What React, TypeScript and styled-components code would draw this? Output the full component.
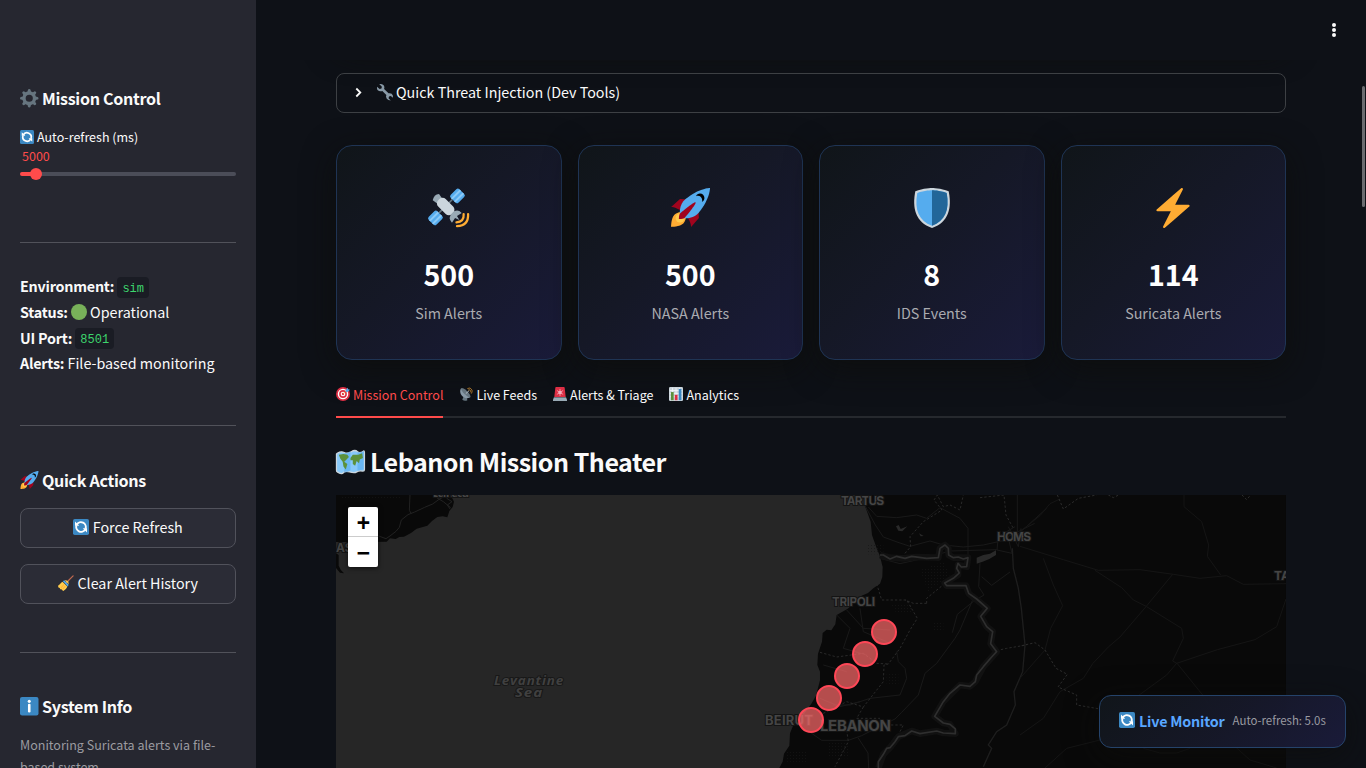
import React from 'react';
import styled, { createGlobalStyle } from 'styled-components';

const Global = createGlobalStyle`
  * { box-sizing: border-box; }
  body {
    margin: 0;
    overflow: hidden;
    background: #0e1117;
    color: #fafafa;
    font-family: "Noto Sans CJK SC", "Noto Sans", sans-serif;
    font-size: 14.32px;
  }
`;

const Shell = styled.div`
  display: flex;
  width: 100vw;
  height: 768px;
  overflow: hidden;
  position: relative;
`;

const Sidebar = styled.aside`
  flex: 0 0 256px;
  height: 768px;
  padding: 87px 20px 0;
  background: #262730;
  overflow: hidden;
`;

const SideHeading = styled.h3`
  display: flex;
  align-items: center;
  gap: 3.5px;
  margin: 0;
  height: 22px;
  font-size: 16.1px;
  font-weight: 600;
  letter-spacing: -0.31px;
  line-height: 22px;
  white-space: nowrap;
`;

const Label = styled.div`
  display: flex;
  align-items: center;
  gap: 3px;
  margin-top: 18px;
  height: 20px;
  font-size: 12.53px;
  line-height: 20px;
`;

const SliderValue = styled.div`
  height: 20px;
  padding-left: 2px;
  color: #ff4b4b;
  font-size: 12.53px;
  line-height: 18px;
`;

const Track = styled.div`
  display: flex;
  align-items: center;
  height: 4px;
  margin-top: 5px;
  border-radius: 4px;
  background: linear-gradient(90deg, #ff4b4b 16px, #4b4d58 16px);
`;

const Thumb = styled.span`
  width: 12px;
  height: 12px;
  margin-left: 10px;
  border-radius: 50%;
  background: #ff4b4b;
`;

const Rule = styled.hr<{ $top: number; $bottom: number }>`
  height: 1px;
  margin: ${p => p.$top}px 0 ${p => p.$bottom}px;
  border: 0;
  background: #51525a;
`;

const Status = styled.div`
  height: 102.6px;
`;

const StatusLine = styled.div`
  display: flex;
  align-items: center;
  height: 25.6px;
  gap: 3.2px;
  line-height: 25.6px;
  white-space: nowrap;
  svg { margin-top: 1px; }
  b {
    font-weight: 600;
    letter-spacing: -0.22px;
  }
`;

const Code = styled.code`
  height: 21px;
  margin-top: 3px;
  padding: 1px 5px 0;
  border-radius: 4px;
  background: #1a1c24;
  color: #3dd56d;
  font: 12px/22px "Liberation Mono", monospace;
`;

const SideButton = styled.button`
  display: flex;
  align-items: center;
  justify-content: center;
  gap: 3.5px;
  width: 100%;
  height: 40px;
  margin: 0 0 16px;
  padding: 0 0 2px;
  border: 1px solid #51525b;
  border-radius: 8px;
  background: #2b2c36;
  color: #fafafa;
  font: inherit;
  line-height: 20px;
`;

const Spacer = styled.div`
  height: 17px;
`;

const Caption = styled.p`
  margin: 17px 0 0;
  color: #9b9ba0;
  font-size: 12.53px;
  line-height: 22.4px;
`;

const Main = styled.main`
  flex: 1;
  height: 768px;
  padding: 0 80px;
  overflow: hidden;
`;

const Banner = styled.div`
  height: 41px;
  border-radius: 16px;
  box-shadow: 0 8px 32px rgba(14, 14, 10, 0.9);
`;

const TopBar = styled.header`
  position: absolute;
  top: 0;
  left: 256px;
  right: 0;
  display: flex;
  justify-content: flex-end;
  align-items: center;
  height: 60px;
  padding-right: 24px;
  background: #0e1117;
`;

const Expander = styled.div`
  display: flex;
  align-items: center;
  height: 40px;
  margin-top: 32px;
  padding: 0 15px 2px;
  border: 1px solid #3d4044;
  border-radius: 8px;
  line-height: 24px;
`;

const ExpanderText = styled.span`
  display: flex;
  align-items: center;
  gap: 3px;
  margin-left: 13px;
`;

const Cards = styled.div`
  display: grid;
  grid-template-columns: repeat(4, 1fr);
  gap: 16px;
  margin-top: 32px;
`;

const Card = styled.section`
  display: flex;
  flex-direction: column;
  align-items: center;
  height: 215px;
  padding-top: 42px;
  border: 1px solid #1f3454;
  border-radius: 16px;
  background: linear-gradient(135deg, #101519 0%, #151826 45%, #1a1b3a 100%);
  box-shadow: 0 8px 32px rgba(13, 13, 11, 0.75);
`;

const Count = styled.div`
  height: 48px;
  margin-top: 22px;
  color: #fff;
  font-size: 28.6px;
  font-weight: 700;
  line-height: 48px;
`;

const CardLabel = styled.div`
  margin-top: 2px;
  color: #aaabb0;
  line-height: 26px;
`;

const Tabs = styled.nav`
  display: flex;
  gap: 16px;
  height: 41px;
  margin-top: 17px;
  box-shadow: inset 0 -2px #26292e;
`;

const Tab = styled.div<{ $active?: boolean }>`
  display: flex;
  align-items: center;
  gap: 3px;
  padding-bottom: 4px;
  border-bottom: 2px solid ${p => (p.$active ? '#ff4b4b' : 'transparent')};
  color: ${p => (p.$active ? '#ff4b4b' : '#fafafa')};
  font-size: 12.5px;
  line-height: 20px;
  svg { margin-top: -1px; }
`;

const Title = styled.h2`
  display: flex;
  align-items: center;
  gap: 6px;
  height: 34px;
  margin: 26px 0 17px;
  font-size: 25.06px;
  font-weight: 600;
  letter-spacing: -0.49px;
  line-height: 34px;
`;

const MapPane = styled.div`
  position: relative;
  height: 273px;
  overflow: hidden;
  background: #262626;
  svg { display: block; }
`;

const ZoomBox = styled.div`
  position: absolute;
  top: 12px;
  left: 12px;
  width: 30px;
  border-radius: 2px;
  background: #fff;
  box-shadow: 0 1px 5px rgba(0, 0, 0, 0.65);
`;

const ZoomButton = styled.div`
  display: flex;
  justify-content: center;
  height: 30px;
  padding-left: 1px;
  color: #000;
  font: bold 23px/37px "Liberation Mono", monospace;
  &:first-child { border-bottom: 1px solid #ccc; }
`;

const Monitor = styled.div`
  position: absolute;
  right: 20px;
  bottom: 20px;
  display: flex;
  align-items: center;
  width: 247px;
  height: 53px;
  padding: 0 19px 3px;
  border: 1px solid #25436a;
  border-radius: 12px;
  background: linear-gradient(135deg, rgba(17, 22, 27, 0.96), rgba(22, 24, 40, 0.96) 50%, rgba(26, 27, 58, 0.96));
  box-shadow: 0 8px 32px rgba(13, 13, 11, 0.7);
  white-space: nowrap;
  strong {
    margin-left: 4px;
    color: #58a6ff;
    font-weight: 600;
    letter-spacing: -0.2px;
  }
  small {
    margin-left: 8px;
    color: #9a9ba2;
    font-size: 11.45px;
  }
`;

const Scroll = styled.div`
  position: absolute;
  right: 1px;
  top: 86px;
  width: 3px;
  height: 121px;
  border-radius: 2px;
  background: #6b6c70;
`;

const Glyph = styled.svg`
  flex: none;
  display: block;
`;

type Name =
  | 'gear' | 'refresh' | 'green' | 'rocket' | 'broom' | 'info' | 'wrench' | 'satellite'
  | 'shield' | 'bolt' | 'dart' | 'dish' | 'siren' | 'chart' | 'map';

const art: Record<Name, React.ReactNode> = {
  gear: (
    <g fill="#66757f">
      {[0, 45, 90, 135, 180, 225, 270, 315].map(a => (
        <path key={a} transform={`rotate(${a} 18 18)`} d="M14 8l1.4-6.2Q15.800 0 18 0t2.600 1.800L22 8z" />
      ))}
      <path fillRule="evenodd" d="M18 4.500a13.500 13.500 0 1 0 0 27 13.500 13.500 0 0 0 0-27zm0 6.500a7 7 0 1 1 0 14 7 7 0 0 1 0-14z" />
    </g>
  ),
  refresh: (
    <>
      <rect width="36" height="36" rx="4" fill="#3b88c3" />
      <g fill="none" stroke="#fff" strokeWidth="4.400">
        <path d="M8.500 12.500A11 11 0 0 1 28.200 22" />
        <path d="M27.500 23.500A11 11 0 0 1 7.800 14" />
      </g>
      <path fill="#fff" d="M4.500 5.500V15H14zM31.500 30.500V21H22z" />
    </>
  ),
  green: <circle cx="18" cy="18" r="18" fill="#78b159" />,
  rocket: (
    <>
      <path fill="#A0041E" d="M1 17l8-7 16 1 1 16-7 8s.001-5.999-6-12-12-6-12-6z" />
      <path fill="#FFAC33" d="M.973 35s-.036-7.979 2.985-11S15 21.187 15 21.187 14.999 29 11.999 32c-3 3-11.026 3-11.026 3z" />
      <circle fill="#FFCC4D" cx="9" cy="27" r="4" />
      <path fill="#55ACEE" d="M35.999 0s-10 0-22 10c-6 5-6 14-4 16s11 2 16-4c10-12 10-22 10-22z" />
      <path d="M26.999 5c-1.623 0-3.013.971-3.641 2.360.502-.227 1.055-.360 1.641-.360 2.209 0 4 1.791 4 4 0 .586-.133 1.139-.359 1.640 1.389-.627 2.359-2.017 2.359-3.640 0-2.209-1.791-4-4-4z" />
      <path fill="#A0041E" d="M8 28s0-4 1-5 13.001-10.999 14-10-9.001 13-10.001 14S8 28 8 28z" />
    </>
  ),
  broom: (
    <>
      <path d="M19 17L34 2" stroke="#c1694f" strokeWidth="2.800" strokeLinecap="round" />
      <path fill="#ffcc4d" d="M10 15l11 11c-1 4-5 7-9 10l-3-2-1-2-3 0-1-3-3-1-1-4c3-2 6-6 10-9z" />
      <path fill="#ffac33" d="M6 28l7-7 1 1-7 8zM10 31l6-7 1 1-6 8z" />
      <path fill="#55acee" d="M11 14l3-2 10 10-2 4z" />
      <path fill="#ffcc4d" d="M15 12q4-1 7 2t2 7z" />
    </>
  ),
  info: (
    <>
      <rect width="36" height="36" rx="4" fill="#3b88c3" />
      <circle cx="18" cy="8.500" r="3" fill="#fff" />
      <rect x="15.500" y="13" width="5" height="17" rx="2.300" fill="#fff" />
    </>
  ),
  wrench: (
    <path
      fill="#8899a6"
      d="M5 0l6 6-1 4-4 1-6-5q-1 8 5 10 4 1 7 0l9 9q-2 4 1 8 3 4 9 4l-5-5 1-4 4-1 5 4q1-6-3-9-3-2-7-1L16 11q2-4-1-8-4-4-10-3z"
    />
  ),
  satellite: (
    <g transform="translate(.2 -.6)">
      <g transform="rotate(-45 18 18)">
        <rect x="-3" y="11" width="11" height="10" rx="2" fill="#55acee" />
        <path d="M-3 14.200h11M-3 18h11" stroke="#8ccaf7" strokeWidth="1.800" />
        <rect x="25" y="11" width="11" height="10" rx="2" fill="#55acee" />
        <path d="M25 14.200h11M25 18h11" stroke="#8ccaf7" strokeWidth="1.800" />
        <path d="M8 15h17" stroke="#66757f" strokeWidth="1.500" />
        <path d="M12 3q4.500-3 8 0l-1 6h-6z" fill="#99aab5" />
        <rect x="11.500" y="6.500" width="9.500" height="17.500" rx="4" fill="#ccd6dd" />
        <path d="M10 29.500q0-6 6.200-6t6.200 6l-5-1-1 4-1.500-4z" fill="#99aab5" />
      </g>
      <path d="M24.500 31.500q7-.5 6.500-7.500M25 35q10.500-.5 10-11" fill="none" stroke="#ffac33" strokeWidth="2" strokeLinecap="round" />
    </g>
  ),
  shield: (
    <>
      <path fill="#CCD6DD" d="M33 3c-7-3-15-3-15-3S10 0 3 3C0 18 3 31 18 36c15-5 18-18 15-33z" />
      <path fill="#55ACEE" d="M18 33.884C6.412 29.729 1.961 19.831 4.760 4.444 11.063 2.029 17.928 2 18 2c.071 0 6.958.040 13.240 2.444 2.799 15.387-1.652 25.285-13.240 29.440z" />
      <path fill="#269" d="M31.240 4.444C24.958 2.040 18.071 2 18 2v31.884c11.588-4.155 16.039-14.053 13.240-29.440z" />
    </>
  ),
  bolt: (
    <path
      fill="#FFAC33"
      d="M32.938 15.651C32.792 15.260 32.418 15 32 15H19.925L26.890 1.458c.219-.426.106-.947-.271-1.243C26.437.071 26.218 0 26 0c-.233 0-.466.082-.653.243L18 6.588 3.347 19.243c-.316.273-.430.714-.284 1.105S3.582 21 4 21h12.075L9.110 34.542c-.219.426-.106.947.271 1.243.182.144.401.215.619.215.233 0 .466-.082.653-.243L18 29.412l14.653-12.655c.317-.273.430-.714.285-1.106z"
    />
  ),
  dart: (
    <>
      <circle cx="18" cy="18" r="18" fill="#dd2e44" />
      <circle cx="18" cy="18" r="13.500" fill="#fff" />
      <circle cx="18" cy="18" r="10" fill="#dd2e44" />
      <circle cx="18" cy="18" r="6" fill="#fff" />
      <circle cx="18" cy="18" r="3" fill="#dd2e44" />
      <path d="M18 18L29 8" stroke="#ffac33" strokeWidth="1.800" />
      <path d="M25 8l5-6 1 4 5 1-6 6-5 0z" fill="#55acee" />
    </>
  ),
  dish: (
    <g transform="translate(1.500 0)">
      <path d="M11 22l-4 11q6 4 13 1l-2-8z" fill="#66757f" />
      <path d="M4 3C-1 10 2 20 9 25s15 5 19 1z" fill="#8899a6" />
      <ellipse cx="16" cy="14.500" rx="16" ry="5" transform="rotate(44 16 14.500)" fill="#66757f" />
      <path d="M16 17L25 9" stroke="#ccd6dd" strokeWidth="2" />
      <path d="M20 4q8-5 12 4 1 5-2 9M22 8q4-2 6 1 1 3-1 5" stroke="#c98a2e" strokeWidth="2" fill="none" />
    </g>
  ),
  siren: (
    <>
      <path d="M6 2q0-2 2-2h20q2 0 2 2l3 26H3z" fill="#dd2e44" />
      <path d="M18 5v18M10 9l16 10M10 19L26 9" stroke="#f4abba" strokeWidth="2" />
      <circle cx="18" cy="14" r="4.500" fill="#f4abba" />
      <path d="M3 26h30l3 6v4H0v-4z" fill="#99aab5" />
      <path d="M3 26h30l1 2H2z" fill="#66757f" />
    </>
  ),
  chart: (
    <>
      <rect width="36" height="36" rx="3" fill="#ccd6dd" />
      <path d="M2 9h32M2 17h32M2 25h32M9 2v32M18 2v32M27 2v32" stroke="#f5f8fa" strokeWidth="2" />
      <path d="M5 13h7v21H5z" fill="#5c913b" />
      <path d="M15 20h7v14h-7z" fill="#dd2e44" />
      <path d="M25 5h7v29h-7z" fill="#3b88c3" />
    </>
  ),
  map: (
    <g transform="translate(.6 1)">
      <path d="M1 7q5-3 9-1t9-1 8 0 8-1q1 0 1 2v22q0 2-2 2-5-1-8 1t-9 0-8 1-8-1q-1 0-1-2V8z" fill="#88c9f9" stroke="#ccd6dd" strokeWidth="1.600" />
      <path d="M10 7q5 0 8-3v25q-3 3-8 3zM27 5q5 1 8-1v24q-4 0-8 2z" fill="#55acee" opacity=".6" />
      <path d="M3 9l6-1 5 1 2 3-4 4-2 2 4 3-2 7-3-4-1-6-3-4zM18 13l3-4 7 0 5-2 1 6-4 2-1 5-3-3-2 6-3-2v-5l-3 0z" fill="#5c913b" />
    </g>
  ),
};

const Emoji = ({ name, size }: { name: Name; size: number }) => (
  <Glyph width={size} height={size} viewBox="0 0 36 36" overflow="visible">{art[name]}</Glyph>
);

const stats: { icon: Name; value: string; label: string }[] = [
  { icon: 'satellite', value: '500', label: 'Sim Alerts' },
  { icon: 'rocket', value: '500', label: 'NASA Alerts' },
  { icon: 'shield', value: '8', label: 'IDS Events' },
  { icon: 'bolt', value: '114', label: 'Suricata Alerts' },
];

const tabs: { icon: Name; label: string }[] = [
  { icon: 'dart', label: 'Mission Control' },
  { icon: 'dish', label: 'Live Feeds' },
  { icon: 'siren', label: 'Alerts & Triage' },
  { icon: 'chart', label: 'Analytics' },
];

const markers = [[548, 137], [529, 159], [511, 181], [493, 203], [475, 225]];

const TheaterMap = () => (
  <svg width="950" height="273" viewBox="0 0 950 273">
    <defs>
      <pattern id="dots" width="9" height="9" patternUnits="userSpaceOnUse">
        <rect width="2.500" height="2.500" fill="#151515" />
      </pattern>
    </defs>
    <g transform="translate(-6 -10) scale(.33333)">
      <path fill="#090909" d="M18 30H362L372 50 368 66 358 78 352 97 338 94 322 96 306 108 292 122 260 131 243 144 222 155 208 156 197 162 180 160 170 170 100 171 18 171zM18 205l8 5 0 32 6 12 10 11-12-2-12-14z" />
      <path fill="url(#dots)" d="M30 30h180v10H30z" />
      <g fill="none" stroke="#222" strokeWidth="3">
        <path d="M240 30l-2 46 6 10M146 153l22 8 12-8 18-14 10-12 6-22 20-16 20-8 30-14 24-10 22-16 14-6M320 38l20 12 22 18M350 40l16 10-14 10 8 12" />
      </g>
    </g>
    <g transform="translate(394 -10) scale(.33333)">
      <path fill="#090909" d="M400 30 404 60 414 88 422 110 426 150 440 190 450 214 458 246 457 276 450 296 430 310 414 324 395 332 378 350 352 372 320 390 316 418 304 436 290 434 278 444 276 470 264 506 262 540 270 560 270 586 258 632 244 656 220 690 190 720 180 745 178 782 162 806 158 830 148 849H1668V30z" />
      <path fill="url(#dots)" d="M570 255l70-25 20 40-65 50zM480 355h65v30h-45zM610 410h30v30h-30zM470 565h35v38h-35zM165 800h65v30h-65zM295 770h60v50h-60zM410 180h50v28h-50z" />
      <g fill="none" stroke="#191919" strokeWidth="3">
        <path d="M404 60 436 120 460 156 504 172 540 184 600 168 640 180 700 186 760 180 805 170 850 160 950 70M415 66 440 94 500 98 560 90 590 100 630 68 690 100 714 130 714 220M862 30V150M855 125l-50 30-4 40 45 10-12-50 80-40M835 125l30 60 8-55M450 220l60 16 80-18 70-20 140-4" />
        <path d="M750 235l-4 70 16 25-30 18-50 40-15 55M755 275l30 26 55-40M730 340l-40 95-15 25-55 75-35 30-20 65-50 52-20 20-50 25-50 25-40 14-80 0-40-28M384 758l30 46 2 45M350 375l50 55 80 5M500 500l5 30 20 20 5 30-20 50-90 10-60 20-50 0M280 540l70 20M270 640l60 25 60-15M320 390l40 40-20 60 70 20M390 370l10 70 70 30" />
      </g>
      <path fill="none" stroke="#1e1e1e" strokeWidth="4" d="M847 190 850 250 865 310 874 370 885 480 878 560 852 620 856 660 830 720 800 740 775 780 785 790 760 845" />
      <path fill="#292929" d="M740 218l20-8 20-4 18-10v14l-20 12-20 8-18 6zM498 124l8-4 6 12 20-8-15 15-12-2zM567 145l14 8-9 1z" />
      <g fill="none" stroke="#292929" strokeWidth="3" strokeDasharray="7 6">
        <path d="M525 205 542 185 540 155 580 110 636 75 612 45 622 30 640 65 660 60 690 75 700 30M750 38 822 30 828 90 850 130M440 296 455 345 530 345 562 400 540 435 510 490 475 537 462 540 460 590 400 666 350 650 270 690M400 666 380 700 450 700M590 355H550L525 345M590 355V340L645 295M270 502 320 516 400 505 440 535 475 537M350 735 355 770 315 845M470 720H520L505 750M800 497 830 490 890 480" />
      </g>
      <g fill="none" stroke="#111" strokeWidth="20" strokeLinejoin="round">
        <path d="M450 210 480 218 520 220 560 216 625 218 630 190 645 180 655 190 656 210 670 218 714 218 710 245 684 240 684 270 644 294 650 302 708 302 716 325 772 370 752 394 770 425 788 440 782 476 800 500 760 545 736 590 720 604 690 600 640 650 614 694 640 714 660 718 676 746 640 744 620 738 570 746 545 738 505 755 480 788 460 808 445 849" />
      </g>
      <path fill="none" stroke="#2e2e2e" strokeWidth="5" strokeLinejoin="round" d="M450 210 460 210 480 222 500 214 525 220 545 214 590 220 625 218 630 190 645 180 655 190 656 210 670 218 685 216 700 222 714 218 710 245 694 246 684 235 680 250 688 264 670 280 644 294 650 302 708 302 716 325 740 342 772 370 752 394 770 425 788 440 782 476 800 500 785 516 760 545 740 570 736 590 720 604 690 600 660 625 640 650 614 694 640 714 660 718 676 732 676 746 640 744 620 738 570 746 545 738 525 752 505 755 495 770 480 788 470 790 460 808 445 830 445 849" />
    </g>
    <g transform="translate(684 -10) scale(.33333)" fill="none" stroke="#151515" strokeWidth="3">
      <path d="M0 140 60 92 90 56 120 42M0 184 130 224 235 256 360 254 460 268 540 280 620 272 670 298 798 296M70 220 100 300 128 362 92 430 75 495 0 580M225 256 305 308 340 345 380 365 485 430 490 460 458 528 472 536 548 630 640 780 690 825 770 849M458 268 378 365 300 456 265 486 218 536 190 580 120 620 70 700 0 750M798 342 770 425 705 464 592 494 470 535 440 570 355 632M492 30V65L545 110 566 180 562 214 602 270M75 849 140 790 240 765M370 790 420 804 470 804 510 790" />
      <path stroke="#2b2b2b" strokeDasharray="7 6" d="M5 482 45 473 75 495 108 550 142 568 114 606 170 630V660L240 672M112 30 130 72 175 40 230 30M265 30 280 38 296 30M666 30 680 44 692 30" />
    </g>
    <g fontFamily="Inter, sans-serif" fontWeight="700" fill="#454545" stroke="#141414" strokeWidth="2" paintOrder="stroke" fontSize="12">
      <text x="97" y="1.500" textLength="36">Larnaca</text>
      <text x="505" y="10" textLength="43">TARTUS</text>
      <text x="496" y="111" textLength="43">TRIPOLI</text>
      <text x="661" y="46" textLength="34">HOMS</text>
      <text x="938" y="85">TADMUR</text>
      <text x="0" y="57">AS</text>
      <text x="429" y="230" textLength="48" fontSize="13">BEIRUT</text>
      <text x="484" y="236" textLength="71" fontSize="15">LEBANON</text>
    </g>
    <g fontFamily="'Open Sans', sans-serif" fontStyle="italic" fontWeight="700" fill="#404040" stroke="#181818" strokeWidth="2" paintOrder="stroke" fontSize="13">
      <text x="158" y="190" textLength="70" lengthAdjust="spacingAndGlyphs" letterSpacing=".8">Levantine</text>
      <text x="179" y="202" textLength="28" lengthAdjust="spacingAndGlyphs" letterSpacing=".8">Sea</text>
    </g>
    {markers.map(([x, y]) => (
      <circle key={x} cx={x} cy={y} r="12" fill="#ff6b6b" fillOpacity=".7" stroke="#ff4757" strokeWidth="2" />
    ))}
  </svg>
);

export default function App() {
  return (
    <>
      <Global />
      <Shell>
        <Sidebar>
          <SideHeading><Emoji name="gear" size={18.5} />Mission Control</SideHeading>
          <Label><Emoji name="refresh" size={14} />Auto-refresh (ms)</Label>
          <SliderValue>5000</SliderValue>
          <Track><Thumb /></Track>
          <Rule $top={66} $bottom={30.4} />
          <Status>
            <StatusLine><b>Environment:</b><Code>sim</Code></StatusLine>
            <StatusLine><b>Status:</b><Emoji name="green" size={16} />Operational</StatusLine>
            <StatusLine><b>UI Port:</b><Code>8501</Code></StatusLine>
            <StatusLine><b>Alerts:</b>File-based monitoring</StatusLine>
          </Status>
          <Rule $top={49} $bottom={43} />
          <SideHeading><Emoji name="rocket" size={18.5} />Quick Actions</SideHeading>
          <Spacer />
          <SideButton><Emoji name="refresh" size={16} />Force Refresh</SideButton>
          <SideButton><Emoji name="broom" size={16} />Clear Alert History</SideButton>
          <Rule $top={48} $bottom={42} />
          <SideHeading><Emoji name="info" size={18.5} />System Info</SideHeading>
          <Caption>Monitoring Suricata alerts via file-based system</Caption>
        </Sidebar>
        <Main>
          <Banner />
          <Expander>
            <svg width="12" height="12" viewBox="0 0 12 12" fill="none" stroke="#fafafa" strokeWidth="1.800">
              <path d="M4.300 2.500l4 4-4 4" />
            </svg>
            <ExpanderText><Emoji name="wrench" size={16} />Quick Threat Injection (Dev Tools)</ExpanderText>
          </Expander>
          <Cards>
            {stats.map(s => (
              <Card key={s.label}>
                <Emoji name={s.icon} size={40} />
                <Count>{s.value}</Count>
                <CardLabel>{s.label}</CardLabel>
              </Card>
            ))}
          </Cards>
          <Tabs>
            {tabs.map((t, i) => (
              <Tab key={t.label} $active={i === 0}><Emoji name={t.icon} size={14} />{t.label}</Tab>
            ))}
          </Tabs>
          <Title><Emoji name="map" size={28} />Lebanon Mission Theater</Title>
          <MapPane>
            <TheaterMap />
            <ZoomBox>
              <ZoomButton>+</ZoomButton>
              <ZoomButton>−</ZoomButton>
            </ZoomBox>
          </MapPane>
        </Main>
        <TopBar>
          <svg width="16" height="16" viewBox="0 0 16 16" fill="#fafafa">
            <circle cx="8" cy="3" r="2" /><circle cx="8" cy="8" r="2" /><circle cx="8" cy="13" r="2" />
          </svg>
        </TopBar>
        <Scroll />
        <Monitor>
          <Emoji name="refresh" size={16} />
          <strong>Live Monitor</strong>
          <small>Auto-refresh: 5.0s</small>
        </Monitor>
      </Shell>
    </>
  );
}
